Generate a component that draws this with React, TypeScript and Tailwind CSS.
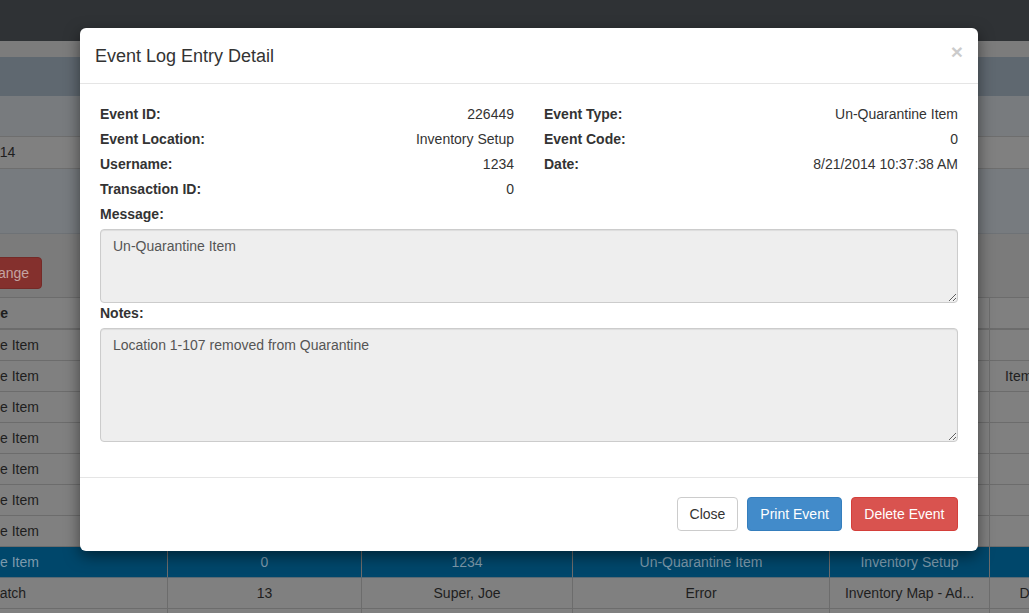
import React from 'react';

const cols = 'grid grid-cols-[380px_194px_211px_257px_160px_211px] ml-[-212px]';

const tableRows = [
    ['Un-Quarantine Item', '', '', '', '', ''],
    ['Un-Quarantine Item', '', '', '', '', 'Item Location 1-107 Updates'],
    ['Un-Quarantine Item', '', '', '', '', ''],
    ['Un-Quarantine Item', '', '', '', '', ''],
    ['Un-Quarantine Item', '', '', '', '', ''],
    ['Un-Quarantine Item', '', '', '', '', ''],
    ['Un-Quarantine Item', '', '', '', '', ''],
];

const Field = ({ label, value }: { label: string; value: string }) => (
    <div className='flex justify-between h-5 mb-[5px]'>
        <span className='font-bold'>{label}</span>
        <span>{value}</span>
    </div>
);

const Cell = ({ children, bold }: { children?: React.ReactNode; bold?: boolean }) => (
    <div className={`h-[30px] leading-[30px] text-center border-r border-[#6c6c6c] whitespace-nowrap overflow-hidden ${bold ? 'font-bold' : ''}`}>
        {children}
    </div>
);

const App = () => {
    return (
        <div className="relative w-[1029px] h-[613px] overflow-hidden bg-[#808080] font-['Liberation_Sans',Arial,sans-serif] text-sm text-[#1e1e1e]">
            {/* page behind the modal, already dimmed */}
            <div className='h-[41px] bg-[#2f3235]'></div>
            <div className='h-4 bg-[#7c7c7c]'></div>
            <div className='h-[39px] bg-[#5f6870]'></div>
            <div className='h-10 bg-[#787b7e]'></div>
            <div className='h-[33px] bg-[#808080] border-y border-[#6e6e6e] leading-[31px]'>
                <span className='ml-[-47px]'>8/21/2014</span>
            </div>
            <div className='h-16 bg-[#777b7f]'></div>
            <div className='h-16 bg-[#7b7b7b] border-t border-[#6e7276] pt-[23px]'>
                <button className='ml-[-33px] h-8 px-3 rounded bg-[#84302d] border border-[#742a27] text-[#c4a4a2]'>Change</button>
            </div>
            <div className={`${cols} border-t border-b-2 border-[#6c6c6c]`}>
                <Cell bold>Log Type</Cell>
                <Cell bold>Code</Cell>
                <Cell bold>Username</Cell>
                <Cell bold>Message</Cell>
                <Cell bold>Location</Cell>
                <Cell bold>Notes</Cell>
            </div>
            {tableRows.map((r, i) => (
                <div key={i} className={`${cols} border-b border-[#6c6c6c]`}>
                    {r.map((c, j) => <Cell key={j}>{c}</Cell>)}
                </div>
            ))}
            <div className={`${cols} bg-[#00476b] text-[#7d9aab] border-b border-[#5a6a74]`}>
                <Cell>Un-Quarantine Item</Cell>
                <Cell>0</Cell>
                <Cell>1234</Cell>
                <Cell>Un-Quarantine Item</Cell>
                <Cell>Inventory Setup</Cell>
                <Cell></Cell>
            </div>
            <div className={`${cols} border-b border-[#6c6c6c]`}>
                <Cell>Inventory Batch</Cell>
                <Cell>13</Cell>
                <Cell>Super, Joe</Cell>
                <Cell>Error</Cell>
                <Cell>Inventory Map - Ad...</Cell>
                <Cell>DIST-0001-AD-TEST-22</Cell>
            </div>
            <div className={`${cols} border-b border-[#6c6c6c]`}>
                <Cell></Cell><Cell></Cell><Cell></Cell><Cell></Cell><Cell></Cell><Cell></Cell>
            </div>

            {/* modal */}
            <div className='absolute left-[80px] top-[28px] w-[898px] bg-white rounded-md shadow-[0_5px_15px_rgba(0,0,0,0.5)] text-[#333]'>
                <div className='px-[15px] pt-[15px] pb-[14px] border-b border-[#e5e5e5] flex justify-between'>
                    <h4 className='text-lg leading-[26px]'>Event Log Entry Detail</h4>
                    <button className='mt-[-2px] self-start text-[21px] font-bold leading-none text-black opacity-20'>×</button>
                </div>
                <div className='px-5 pt-5 pb-5'>
                    <div className='grid grid-cols-2 gap-x-[30px]'>
                        <div>
                            <Field label='Event ID:' value='226449' />
                            <Field label='Event Location:' value='Inventory Setup' />
                            <Field label='Username:' value='1234' />
                            <Field label='Transaction ID:' value='0' />
                        </div>
                        <div>
                            <Field label='Event Type:' value='Un-Quarantine Item' />
                            <Field label='Event Code:' value='0' />
                            <Field label='Date:' value='8/21/2014 10:37:38 AM' />
                        </div>
                    </div>
                    <label className='block font-bold h-5 mb-[5px]'>Message:</label>
                    <textarea readOnly className='block w-full h-[74px] px-3 py-[6px] bg-[#eeeeee] border border-[#cccccc] rounded text-[#555] leading-5 shadow-[inset_0_1px_1px_rgba(0,0,0,0.075)]' value='Un-Quarantine Item' />
                    <label className='block font-bold h-5 mb-[5px]'>Notes:</label>
                    <textarea readOnly className='block w-full h-[114px] px-3 py-[6px] bg-[#eeeeee] border border-[#cccccc] rounded text-[#555] leading-5 mb-[15px] shadow-[inset_0_1px_1px_rgba(0,0,0,0.075)]' value='Location 1-107 removed from Quarantine' />
                </div>
                <div className='px-5 pt-[19px] pb-5 border-t border-[#e5e5e5] flex justify-end gap-[9px]'>
                    <button className='h-[34px] px-3 rounded bg-white border border-[#cccccc] text-[#333]'>Close</button>
                    <button className='h-[34px] px-3 rounded bg-[#428bca] border border-[#357ebd] text-white'>Print Event</button>
                    <button className='h-[34px] px-[12.5px] rounded bg-[#d9534f] border border-[#d43f3a] text-white'>Delete Event</button>
                </div>
            </div>
        </div>
    );
};

export default App;
